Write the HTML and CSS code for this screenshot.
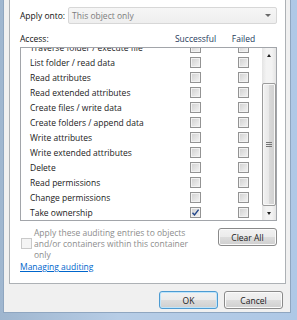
FILE: index.html
```html
<!DOCTYPE html>
<html>
<head>
    <title>Auditing Entry</title>
    <link rel="stylesheet" href="styles.css">
</head>
<body>
    <div class="frame">
        <div class="dialog">
            <div class="page">
                <div class="apply-row">
                    <span class="label">Apply onto:</span>
                    <div class="combo">
                        <span>This object only</span>
                        <span class="combo-arrow"></span>
                    </div>
                </div>

                <div class="list-head">
                    <span>Access:</span>
                    <span class="col">Successful</span>
                    <span></span>
                    <span class="col">Failed</span>
                </div>

                <div class="listbox">
                    <div class="rows">
                        <div class="rows-inner">
                            <div class="row"><span>Traverse folder / execute file</span><span class="check"></span><span></span><span class="check"></span></div>
                            <div class="row"><span>List folder / read data</span><span class="check"></span><span></span><span class="check"></span></div>
                            <div class="row"><span>Read attributes</span><span class="check"></span><span></span><span class="check"></span></div>
                            <div class="row"><span>Read extended attributes</span><span class="check"></span><span></span><span class="check"></span></div>
                            <div class="row"><span>Create files / write data</span><span class="check"></span><span></span><span class="check"></span></div>
                            <div class="row"><span>Create folders / append data</span><span class="check"></span><span></span><span class="check"></span></div>
                            <div class="row"><span>Write attributes</span><span class="check"></span><span></span><span class="check"></span></div>
                            <div class="row"><span>Write extended attributes</span><span class="check"></span><span></span><span class="check"></span></div>
                            <div class="row"><span>Delete</span><span class="check"></span><span></span><span class="check"></span></div>
                            <div class="row"><span>Read permissions</span><span class="check"></span><span></span><span class="check"></span></div>
                            <div class="row"><span>Change permissions</span><span class="check"></span><span></span><span class="check"></span></div>
                            <div class="row">
                                <span>Take ownership</span>
                                <span class="check">
                                    <svg width="9" height="9" viewBox="0 0 9 9"><path d="M1.5 4.8 L3.5 7 L7.6 1.6" fill="none" stroke="#22468a" stroke-width="1.4"/></svg>
                                </span>
                                <span></span>
                                <span class="check"></span>
                            </div>
                        </div>
                    </div>
                    <div class="scrollbar">
                        <div class="sb-btn up"></div>
                        <div class="sb-track"></div>
                        <div class="sb-thumb"><span class="grip"></span></div>
                        <div class="sb-btn down"></div>
                    </div>
                </div>

                <div class="options">
                    <div class="inherit">
                        <span class="check disabled"></span>
                        <span class="inherit-text">Apply these auditing entries to objects<br>and/or containers within this container<br>only</span>
                    </div>
                    <div class="button clear">Clear All</div>
                </div>

                <a class="link" href="#">Managing auditing</a>
            </div>

            <div class="buttons">
                <div class="button default">OK</div>
                <div class="button">Cancel</div>
            </div>
        </div>
    </div>
</body>
</html>
```

FILE: styles.css
```css
* {
    box-sizing: border-box;
}

body {
    margin: 0;
    font-family: "Open Sans", "Noto Sans", sans-serif;
    font-size: 8.5px;
    color: #1a1a1a;
    background-color: #afc7e3;
}

.frame {
    width: 297px;
    height: 320px;
    padding: 0 6px 7px 3px;
    background: linear-gradient(90deg, #9fb6cf, #b7cde6 40%, #aec8e6);
}

.dialog {
    height: 100%;
    display: flex;
    flex-direction: column;
    background-color: #f0f0f0;
    border: 1px solid #8fa6c0;
    border-top: none;
    padding: 0 4px 0 5px;
}

.page {
    display: flex;
    flex-direction: column;
    background-color: #fff;
    border: 1px solid #adb1b5;
    border-top: none;
    padding: 7px 8px 10px 10px;
}

/* Apply onto */

.apply-row {
    display: flex;
    align-items: center;
    gap: 3px;
}

.label {
    line-height: 17px;
    color: #111;
}

.combo {
    flex: 1;
    height: 17px;
    display: flex;
    align-items: center;
    justify-content: space-between;
    padding: 0 5px 0 3px;
    border: 1px solid #d7d7d7;
    border-radius: 2px;
    background: linear-gradient(#f6f6f6, #eeeeee);
    color: #7d7d7d;
}

.combo-arrow {
    width: 0;
    height: 0;
    border-left: 3px solid transparent;
    border-right: 3px solid transparent;
    border-top: 3px solid #6a6a6a;
}

/* list */

.list-head {
    display: grid;
    grid-template-columns: 170px 11px 37px 11px;
    margin: 9px 0 2px;
    line-height: 12px;
    color: #111;
}

.col {
    display: flex;
    justify-content: center;
    white-space: nowrap;
    color: #1e395b;
}

.listbox {
    display: flex;
    height: 174px;
    border: 1px solid #a2a5aa;
}

.rows {
    flex: 1;
    overflow: hidden;
}

.rows-inner {
    margin-top: -8px;
}

.row {
    display: grid;
    grid-template-columns: 160px 11px 37px 11px;
    align-items: center;
    height: 15px;
    padding-left: 9px;
    white-space: nowrap;
}

.check {
    display: flex;
    align-items: center;
    justify-content: center;
    width: 11px;
    height: 11px;
    border: 1px solid #939393;
    background: linear-gradient(135deg, #cfcfcf, #f4f4f4);
    box-shadow: inset 0 0 0 1px #f2f2f2;
}

.check.disabled {
    border-color: #c9c9c9;
    background: #f4f4f4;
    box-shadow: none;
}

/* scrollbar */

.scrollbar {
    width: 14px;
    display: flex;
    flex-direction: column;
    background: linear-gradient(90deg, #e4e4e4, #f3f3f3 30%, #f3f3f3 70%, #e4e4e4);
}

.sb-btn {
    height: 14px;
    display: flex;
    align-items: center;
    justify-content: center;
}

.sb-btn::before {
    content: "";
    width: 0;
    height: 0;
    border-left: 2.5px solid transparent;
    border-right: 2.5px solid transparent;
}

.sb-btn.up::before {
    border-bottom: 3px solid #222;
}

.sb-btn.down::before {
    border-top: 3px solid #222;
}

.sb-track {
    height: 21px;
}

.sb-thumb {
    height: 123px;
    display: flex;
    align-items: center;
    justify-content: center;
    border: 1px solid #9b9b9b;
    border-radius: 2px;
    background: linear-gradient(90deg, #f2f2f2, #e8e8e8 50%, #dadada 50%, #d0d0d0);
    box-shadow: inset 0 0 0 1px #f8f8f8;
}

.grip {
    width: 6px;
    height: 5px;
    background: repeating-linear-gradient(#767676 0 1px, transparent 1px 2px);
}

/* bottom of the page */

.options {
    display: flex;
    justify-content: space-between;
    align-items: flex-start;
    margin-top: 6px;
}

.inherit {
    display: flex;
    align-items: center;
    gap: 2px;
    padding-left: 1px;
}

.inherit-text {
    line-height: 11px;
    white-space: nowrap;
    color: #8d8d8d;
}

.button {
    width: 59px;
    height: 18px;
    display: flex;
    align-items: center;
    justify-content: center;
    border: 1px solid #8a8a8a;
    border-radius: 3px;
    background: linear-gradient(#f2f2f2, #ebebeb 50%, #dddddd 50%, #cfcfcf);
    box-shadow: inset 0 0 0 1px #fbfbfb;
    color: #1a1a1a;
}

.button.clear {
    margin-top: 1px;
}

.button.default {
    border-color: #4d9bd2;
    box-shadow: inset 0 0 0 1px #bfe5fb;
}

.link {
    align-self: flex-start;
    margin-top: 1px;
    line-height: 12px;
    color: #0066cc;
    text-decoration: underline;
}

.buttons {
    display: flex;
    justify-content: flex-end;
    gap: 6px;
    margin-top: 7px;
    padding-right: 3px;
}
```
